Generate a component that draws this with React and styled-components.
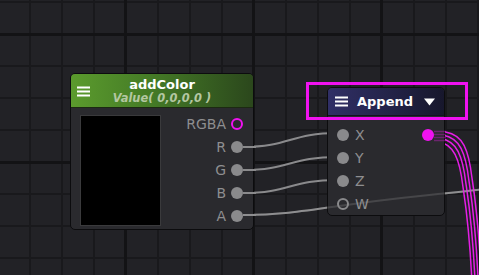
import styled, { createGlobalStyle } from "styled-components";

const GlobalStyle = createGlobalStyle`
  html, body, #root {
    margin: 0;
    padding: 0;
    width: 100%;
    height: 100%;
  }
  body {
    background-color: #222226;
    background-image:
      linear-gradient(90deg, #131315 3px, transparent 3px),
      linear-gradient(180deg, #131315 3px, transparent 3px),
      linear-gradient(90deg, #19191c 2px, transparent 2px),
      linear-gradient(180deg, #19191c 2px, transparent 2px);
    background-size: 128px 128px, 128px 128px, 32px 32px, 32px 32px;
    background-position: 124px 0, 0 33px, 29px 0, 0 1px;
    overflow: hidden;
    font-family: "DejaVu Sans", sans-serif;
  }
`;

const Canvas = styled.div`
  position: relative;
  width: 479px;
  height: 275px;
  overflow: hidden;
`;

const Wires = styled.svg`
  position: absolute;
  left: 0;
  top: 0;
  width: 479px;
  height: 275px;
  pointer-events: none;
`;

const Node = styled.div`
  position: absolute;
  left: ${(p) => p.$x}px;
  top: ${(p) => p.$y}px;
  width: ${(p) => p.$w}px;
  height: ${(p) => p.$h}px;
  box-sizing: border-box;
  border: 1px solid #0c0c0e;
  border-radius: 5px;
  background: #2a2a2e;
  display: flex;
  flex-direction: column;
  overflow: hidden;
`;

const ColorHeader = styled.div`
  display: grid;
  grid-template-columns: 24px 1fr 24px;
  align-items: center;
  height: 34px;
  box-sizing: border-box;
  padding: 4px 0 3px;
  background: linear-gradient(90deg, #5b9b2d 0%, #447a26 45%, #2b471c 100%);
  border-bottom: 1px solid #1c2a12;
`;

const AppendHeader = styled.div`
  display: flex;
  align-items: center;
  height: 27px;
  padding: 0 9px 0 7px;
  gap: 9px;
  background: linear-gradient(90deg, #302f66 0%, #24244a 50%, #17172c 100%);
  border-bottom: 1px solid #121220;
`;

const MenuIcon = styled.svg`
  display: block;
  justify-self: center;
  margin-left: ${(p) => p.$ml || 0}px;
`;

const TitleBlock = styled.div`
  display: flex;
  flex-direction: column;
  align-items: center;
`;

const Title = styled.div`
  color: #ffffff;
  font-weight: bold;
  font-size: 13px;
  line-height: 14px;
  white-space: nowrap;
  flex: ${(p) => (p.$grow ? 1 : "none")};
`;

const SubTitle = styled.div`
  color: #b4c7a2;
  font-weight: bold;
  font-style: italic;
  font-size: 11.4px;
  line-height: 13px;
  white-space: nowrap;
`;

const ColorBody = styled.div`
  display: flex;
  flex: 1;
  padding: 7px 10px 0 9px;
  gap: 10px;
`;

const Preview = styled.div`
  width: 79px;
  height: 109px;
  background: #000;
  border: 1px solid #3a3a3c;
`;

const Ports = styled.div`
  flex: 1;
  display: flex;
  flex-direction: column;
  margin-top: -3px;
`;

const Row = styled.div`
  display: flex;
  align-items: center;
  justify-content: ${(p) => (p.$right ? "flex-end" : "flex-start")};
  height: 23px;
  gap: ${(p) => p.$gap || 5}px;
`;

const Label = styled.span`
  color: #8e8e90;
  font-size: 14px;
  line-height: 16px;
`;

const Port = styled.span`
  width: 12px;
  height: 12px;
  box-sizing: border-box;
  border-radius: 50%;
  flex: none;
  position: relative;
  z-index: 1;
  background: ${(p) => (p.$ring ? "transparent" : p.$color || "#8a8a8c")};
  border: ${(p) => (p.$ring ? `2px solid ${p.$color || "#8a8a8c"}` : "none")};
`;

const AppendBody = styled.div`
  display: flex;
  flex-direction: column;
  padding: 7px 10px 0 9px;
`;

const Spacer = styled.span`
  flex: 1;
`;

const Selection = styled.div`
  position: absolute;
  left: 306px;
  top: 82px;
  width: 162px;
  height: 38px;
  box-sizing: border-box;
  border: 3px solid #f012f0;
`;

function Hamburger({ ml }) {
  return (
    <MenuIcon width="13" height="11" viewBox="0 0 13 11" $ml={ml}>
      <rect x="0" y="0.5" width="13" height="2" fill="#fff" />
      <rect x="0" y="4.5" width="13" height="2" fill="#fff" />
      <rect x="0" y="8.5" width="13" height="2" fill="#fff" />
    </MenuIcon>
  );
}

const magentaOffsets = [-4.5, -1.5, 1.5, 4.5];
const magentaPath = "M434 136 C455 136, 462 148, 466 172 C469 195, 474 215, 477 290";
const longWire = "M243 215 C300 215, 330 205, 420 196 S470 190, 520 186";

export default function App() {
  return (
    <>
      <GlobalStyle />
      <Canvas>
        <Wires viewBox="0 0 479 275">
          <g fill="none" stroke="#8a8a8c" strokeWidth="2">
            <path d="M243 147 C290 147, 290 133, 338 133" />
            <path d="M243 170 C290 170, 290 157, 338 157" />
            <path d="M243 193 C290 193, 290 180, 338 180" />
            <path d={longWire} />
          </g>
          <g fill="none" stroke="#e41ee4" strokeWidth="1.5">
            {magentaOffsets.map((k) => (
              <path key={k} d={magentaPath} transform={`translate(${k} ${-k})`} />
            ))}
          </g>
        </Wires>

        <Node $x={70} $y={73} $w={184} $h={157}>
          <ColorHeader>
            <Hamburger ml={1} />
            <TitleBlock>
              <Title>addColor</Title>
              <SubTitle>Value( 0,0,0,0 )</SubTitle>
            </TitleBlock>
          </ColorHeader>
          <ColorBody>
            <Preview />
            <Ports>
              <Row $right>
                <Label>RGBA</Label>
                <Port $ring $color="#f012f0" />
              </Row>
              {["R", "G", "B", "A"].map((c) => (
                <Row $right key={c}>
                  <Label>{c}</Label>
                  <Port />
                </Row>
              ))}
            </Ports>
          </ColorBody>
        </Node>

        <Node $x={327} $y={87} $w={118} $h={129}>
          <AppendHeader>
            <Hamburger />
            <Title $grow>Append</Title>
            <svg width="11" height="8" viewBox="0 0 11 8">
              <path d="M0 0.5 L11 0.5 L5.5 7.5 Z" fill="#fff" />
            </svg>
          </AppendHeader>
          <AppendBody>
            <Row $gap={6}>
              <Port />
              <Label>X</Label>
              <Spacer />
              <Port $color="#f012f0" />
            </Row>
            <Row $gap={6}>
              <Port />
              <Label>Y</Label>
            </Row>
            <Row $gap={6}>
              <Port />
              <Label>Z</Label>
            </Row>
            <Row $gap={6}>
              <Port $ring />
              <Label>W</Label>
            </Row>
          </AppendBody>
        </Node>

        <Wires viewBox="0 0 479 275">
          <g fill="none" stroke="#8a8a8c" strokeWidth="2">
            <path d="M243 147 L256 147" />
            <path d="M243 170 L256 170" />
            <path d="M243 193 L256 193" />
            <path d="M243 215 L256 215" />
          </g>
          <g fill="none" stroke="#e41ee4" strokeWidth="1.5" opacity="0.35">
            {magentaOffsets.map((k) => (
              <path key={k} d={`M434 ${136 - k} L446 ${136 - k}`} />
            ))}
          </g>
          <path d={longWire} fill="none" stroke="#9a9a9c" strokeWidth="2" opacity="0.25" />
        </Wires>

        <Selection />
      </Canvas>
    </>
  );
}
